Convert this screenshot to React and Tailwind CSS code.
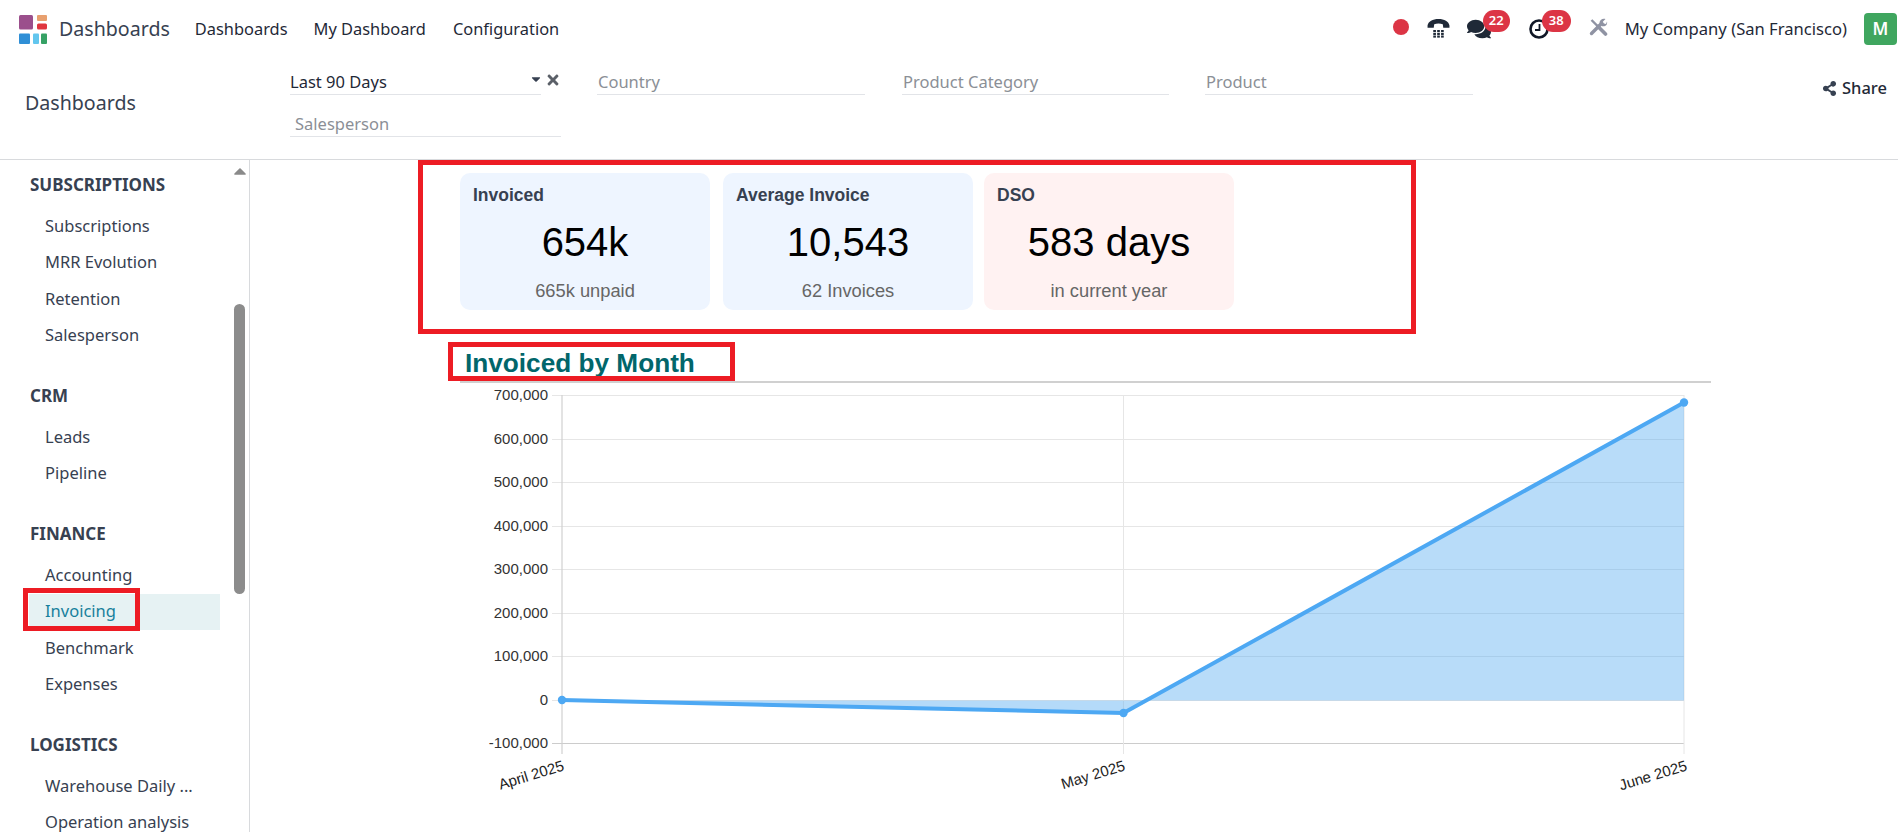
import React from "react";
import { FaComments, FaShareAlt, FaTimes, FaCaretDown, FaCaretUp } from "react-icons/fa";

const noto = "font-['Noto_Sans',sans-serif]";
const arial = "font-['Liberation_Sans',Arial,sans-serif]";

function Logo() {
  return (
    <svg width="28" height="29" viewBox="0 0 28 29" className="shrink-0">
      <rect x="0" y="0" width="14" height="14.5" rx="1.5" fill="#9b4f8c" />
      <rect x="18" y="0" width="10" height="6" rx="1" fill="#e8a06f" />
      <rect x="18" y="8.5" width="10" height="6" rx="1.5" fill="#e0363f" />
      <rect x="0" y="18.5" width="11" height="10.5" rx="1" fill="#2f8fd6" />
      <rect x="14" y="18.5" width="6" height="10.5" rx="1" fill="#62c6ee" />
      <rect x="22" y="18.5" width="6" height="10.5" rx="1" fill="#36a165" />
    </svg>
  );
}

function PhoneIcon() {
  const xs = [6.5, 10.6, 14.7];
  const ys = [12.6, 15.6, 18.4];
  return (
    <svg width="23" height="20" viewBox="0 0 24 21" className="mb-[2px] ml-[18px] shrink-0 text-[#1f2937]">
      <path
        d="M0.5 8C1 3.5 6 1 12 1s11 2.500 11.500 7v2.300h-6.500L16.500 6.500C14 5.600 10 5.600 7.500 6.500L7 10.300H0.500Z"
        fill="currentColor"
      />
      {ys.map((y) => xs.map((x) => <rect key={`${x}-${y}`} x={x} y={y} width="2.800" height="2.200" fill="currentColor" />))}
    </svg>
  );
}

function ClockIcon() {
  return (
    <svg width="20" height="20" viewBox="0 0 20 20" className="block text-[#111827]">
      <circle cx="10" cy="10" r="8.500" fill="none" stroke="currentColor" strokeWidth="2.600" />
      <path d="M10.500 5V11H6" fill="none" stroke="currentColor" strokeWidth="1.800" />
    </svg>
  );
}

function ToolsIcon() {
  return (
    <svg width="19" height="18" viewBox="0 0 19 18" className="mb-[5px] ml-[40px] shrink-0 text-[#8f93a3]">
      <path d="M2.500 2L9 8.500" stroke="currentColor" strokeWidth="2.400" fill="none" />
      <path d="M9 8.500L16.500 16" stroke="currentColor" strokeWidth="3.600" fill="none" strokeLinecap="round" />
      <path d="M2.500 15.500L12 6" stroke="currentColor" strokeWidth="3.400" fill="none" strokeLinecap="round" />
      <path d="M10.500 5C10.500 2 13.500 0 16.500 1L13.800 3.700L15 5.500L17 6L18 3.500C18.800 6.500 16.500 9 13 8.200Z" fill="currentColor" />
    </svg>
  );
}

function Nav() {
  return (
    <header className={`flex h-[58px] items-center text-[16.4px] text-[#1f2937] ${noto}`}>
      <div className="ml-[19px]"><Logo /></div>
      <span className="ml-[12px] text-[19.6px] text-[#374151]">Dashboards</span>
      <span className="ml-[25px]">Dashboards</span>
      <span className="ml-[26px]">My Dashboard</span>
      <span className="ml-[27px]">Configuration</span>
      <div className="ml-auto flex items-center">
        <span className="mb-[4px] h-4 w-4 rounded-full bg-[#dc3545]" />
        <PhoneIcon />
        <div className="relative ml-[17px] mb-[1px]">
          <FaComments className="text-[24px] text-[#1f2937]" />
          <span className="absolute left-[16px] top-[-7px] flex h-[22px] w-[27px] items-center justify-center rounded-full bg-[#dc3545] text-[13px] font-semibold text-white">22</span>
        </div>
        <div className="relative ml-[38px] mb-[1px]">
          <ClockIcon />
          <span className="absolute left-[13px] top-[-9px] flex h-[22px] w-[29px] items-center justify-center rounded-full bg-[#dc3545] text-[13px] font-semibold text-white">38</span>
        </div>
        <ToolsIcon />
        <span className="ml-[17px] text-[16.600px]">My Company (San Francisco)</span>
        <span className="ml-[17px] mr-px flex h-[32px] w-[33px] items-center justify-center rounded-[4px] bg-[#3fa65f] text-[17px] font-semibold text-white">M</span>
      </div>
    </header>
  );
}

function Filter({ label, value, indent, className }) {
  return (
    <div className={`flex h-[36px] items-end border-b border-[#e2e4e8] pb-[1px] leading-[22px] ${className}`}>
      <span className={value ? "text-[#1f2937]" : `text-[#8b8f96] ${indent}`}>{label}</span>
    </div>
  );
}

function Panel() {
  return (
    <div className={`flex h-[102px] border-b border-[#d8dadd] text-[16.5px] ${noto}`}>
      <div className="flex w-[290px] items-center pb-[11px] pl-[25px] text-[19.600px] text-[#374151]">Dashboards</div>
      <div className="pt-[1px]">
        <div className="flex">
          <div className="flex w-[271px]">
            <Filter label="Last 90 Days" value className="w-[251px]" />
            <div className="relative h-[36px] w-[20px]">
              <FaCaretDown className="absolute left-[-12px] top-[13px] text-[14px] text-[#374151]" />
              <FaTimes className="absolute left-[4px] top-[13px] text-[16px] text-[#5b6068]" />
            </div>
          </div>
          <Filter label="Country" indent="pl-[1px]" className="ml-[36px] w-[268px]" />
          <Filter label="Product Category" indent="pl-[1px]" className="ml-[37px] w-[267px]" />
          <Filter label="Product" indent="pl-[1px]" className="ml-[36px] w-[268px]" />
        </div>
        <Filter label="Salesperson" indent="pl-[5px]" className="mt-[6px] w-[271px]" />
      </div>
      <div className="ml-auto flex items-start pt-[18px] pr-[11px] font-medium text-[#1f2937]">
        <span className="flex items-center gap-[5px]"><FaShareAlt className="text-[15px] text-[#374151]" />Share</span>
      </div>
    </div>
  );
}

const sections = [
  ["SUBSCRIPTIONS", ["Subscriptions", "MRR Evolution", "Retention", "Salesperson"]],
  ["CRM", ["Leads", "Pipeline"]],
  ["FINANCE", ["Accounting", "Invoicing", "Benchmark", "Expenses"]],
  ["LOGISTICS", ["Warehouse Daily ...", "Operation analysis"]],
];

function Sidebar() {
  return (
    <aside className={`flex h-full w-[250px] shrink-0 overflow-hidden border-r border-[#d8dadd] ${noto}`}>
      <div className="w-[234px] pt-[7px]">
        {sections.map(([title, items]) => (
          <div key={title} className="mb-[24px]">
            <div className="flex h-[36px] items-center pl-[30px] text-[17px] font-bold text-[#374151]">{title}</div>
            <div className="mt-[5px] mr-[14px] ml-[29px]">
              {items.map((item) => (
                <div
                  key={item}
                  className={`flex h-[36.5px] items-center pl-[16px] text-[16.5px] ${item === "Invoicing" ? "bg-[#e6f2f3] text-[#17809c]" : "text-[#374151]"}`}
                >
                  {item}
                </div>
              ))}
            </div>
          </div>
        ))}
      </div>
      <div className="flex w-[15px] flex-col items-center pt-[1px]">
        <FaCaretUp className="mr-[4px] text-[20px] text-[#8a8a8a]" />
        <div className="mt-[123px] mr-[4px] h-[290px] w-[11px] rounded-full bg-[#8c8c8c]" />
      </div>
    </aside>
  );
}

function Card({ title, value, sub, className }) {
  return (
    <div className={`flex h-[137px] w-[250px] flex-col rounded-[10px] ${className}`}>
      <div className="pt-[11px] pl-[13px] text-[17.500px] leading-[22px] font-bold text-[#374151]">{title}</div>
      <div className="mt-[13px] text-center text-[40px] leading-[46px] text-black">{value}</div>
      <div className="mt-[15px] text-center text-[18.300px] leading-[22px] text-[#666]">{sub}</div>
    </div>
  );
}

function Chart() {
  const ys = [395, 439, 482, 526, 569, 613, 656, 700, 743];
  const labels = ["700,000", "600,000", "500,000", "400,000", "300,000", "200,000", "100,000", "0", "-100,000"];
  const left = 562, mid = 1123.5, right = 1684;
  const ox = 440, oy = 383;
  const X = (v) => v - ox;
  const Y = (v) => v - oy;
  return (
    <svg width="1270" height="449" viewBox="0 0 1270 449" className={`block ${arial}`}>
      {ys.map((y, i) => (
        <line key={y} x1={X(552)} x2={X(right)} y1={Y(y) + 0.5} y2={Y(y) + 0.5} stroke={i === 8 ? "#cccccc" : "#e6e6e6"} strokeWidth="1.2" />
      ))}
      <line x1={X(left)} x2={X(left)} y1={Y(395)} y2={Y(754)} stroke="#d0d0d0" strokeWidth="1.2" />
      <line x1={X(mid)} x2={X(mid)} y1={Y(395)} y2={Y(754)} stroke="#e6e6e6" />
      <line x1={X(right)} x2={X(right)} y1={Y(395)} y2={Y(754)} stroke="#e6e6e6" />
      {labels.map((t, i) => (
        <text key={t} x={X(548)} y={Y(ys[i]) + 5} textAnchor="end" fontSize="15" fill="#333333">{t}</text>
      ))}
      <polygon
        points={`${X(left)},${Y(700.5)} ${X(mid)},${Y(700.5)} ${X(mid)},${Y(713)}`}
        fill="rgba(77,167,241,0.42)"
      />
      <polygon
        points={`${X(mid)},${Y(713)} ${X(right)},${Y(402.5)} ${X(right)},${Y(700.5)} ${X(mid)},${Y(700.5)}`}
        fill="rgba(77,167,241,0.4)"
      />
      <polyline points={`${X(left)},${Y(700)} ${X(mid)},${Y(713)} ${X(right)},${Y(402.5)}`} fill="none" stroke="#4da8f3" strokeWidth="4" strokeLinejoin="round" />
      {[[left, 700], [mid, 713], [right, 402.5]].map(([x, y]) => (
        <circle key={x} cx={X(x)} cy={Y(y)} r="4.2" fill="#4da8f3" />
      ))}
      {[["April 2025", 565], ["May 2025", 1126], ["June 2025", 1688]].map(([t, x]) => (
        <text key={t} x={X(x)} y={Y(770)} textAnchor="end" fontSize="15" fill="#222222" transform={`rotate(-17 ${X(x)} ${Y(770)})`}>{t}</text>
      ))}
    </svg>
  );
}

function Main() {
  return (
    <main className={`relative min-w-0 flex-1 overflow-hidden pt-[13px] ${arial}`}>
      <div className="ml-[210px] flex">
        <Card title="Invoiced" value="654k" sub="665k unpaid" className="bg-[#eef5ff]" />
        <Card title="Average Invoice" value="10,543" sub="62 Invoices" className="ml-[13px] bg-[#eef5ff]" />
        <Card title="DSO" value="583 days" sub="in current year" className="ml-[11px] bg-[#fff2f2]" />
      </div>
      <div className="mt-[34px] ml-[210px] mr-[187px] h-[39px] border-b-2 border-[#d0d0d0] pl-[5px] text-[26.200px] leading-[38px] font-bold text-[#01666b]">
        Invoiced by Month
      </div>
      <div className="ml-[190px]"><Chart /></div>
      <div className="absolute left-[168px] top-0 h-[174px] w-[998px] border-[5px] border-[#ed1c24]" />
      <div className="absolute left-[198px] top-[182px] h-[39px] w-[287px] border-[5px] border-[#ed1c24]" />
    </main>
  );
}

export default function App() {
  return (
    <div className="flex h-[832px] w-[1898px] flex-col overflow-hidden bg-white">
      <Nav />
      <Panel />
      <div className="relative flex min-h-0 flex-1">
        <Sidebar />
        <Main />
        <div className="absolute left-[23px] top-[428px] h-[43px] w-[117px] border-[5px] border-[#ed1c24]" />
      </div>
    </div>
  );
}
